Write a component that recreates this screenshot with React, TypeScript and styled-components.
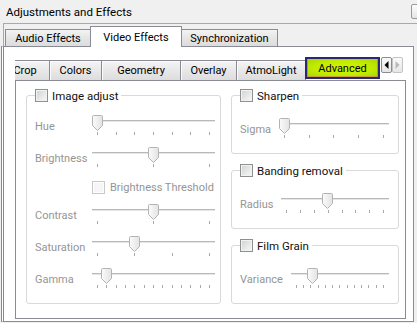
import React from "react";
import styled, { createGlobalStyle } from "styled-components";

const FONT = `Roboto, "Liberation Sans", "DejaVu Sans", sans-serif`;

const Global = createGlobalStyle`
  html, body { margin: 0; padding: 0; background: #f0f0f0; }
  * { box-sizing: border-box; }
`;

const Window = styled.div`
  width: 417px;
  height: 323px;
  overflow: hidden;
  background: #f0f0f0;
  display: flex;
  flex-direction: column;
  font-family: ${FONT};
  font-size: 11px;
  color: #000;
`;

const TitleBar = styled.div`
  height: 23px;
  flex: none;
  display: flex;
  align-items: center;
  justify-content: space-between;
  padding-left: 6px;
  font-size: 11.5px;
`;

const TitleButton = styled.div`
  width: 12px;
  height: 15px;
  margin-right: -6px;
  border: 1px solid #9a9a9a;
  border-radius: 2px;
  background: linear-gradient(#fdfdfd, #e4e4e4);
`;

const OuterTabBar = styled.div`
  height: 23px;
  flex: none;
  margin-left: 3px;
  border-top: 1px solid #a9a9a9;
  border-left: 1px solid #a9a9a9;
  padding-left: 1px;
  display: flex;
  align-items: flex-end;
`;

const OuterTab = styled.div<{ $w: number; $active?: boolean }>`
  width: ${(p) => p.$w}px;
  height: ${(p) => (p.$active ? 21 : 17)}px;
  margin-bottom: ${(p) => (p.$active ? -1 : 0)}px;
  margin-right: -1px;
  position: relative;
  z-index: ${(p) => (p.$active ? 2 : 1)};
  display: flex;
  align-items: center;
  justify-content: center;
  border: 1px solid #898c95;
  border-bottom: none;
  background: ${(p) =>
    p.$active ? "#ffffff" : "linear-gradient(#f3f3f3, #e6e6e6 50%, #dcdcdc)"};
  font-size: 11px;
  white-space: nowrap;
`;

const OuterPane = styled.div`
  width: 413px;
  height: 276px;
  margin-left: 1px;
  flex: none;
  background: #ffffff;
  border: 1px solid #898c95;
  border-left: 3px double #8a8a8a;
  padding: 10px 0 0 11px;
  display: flex;
  flex-direction: column;
`;

const InnerTabRow = styled.div`
  width: 391px;
  height: 23px;
  flex: none;
  display: flex;
`;

const TabStrip = styled.div`
  flex: 1;
  min-width: 0;
  overflow: hidden;
  display: flex;
  align-items: flex-end;
`;

const InnerTab = styled.div<{ $w: number; $shift?: number }>`
  flex: none;
  width: ${(p) => p.$w}px;
  height: 20px;
  margin-left: ${(p) => p.$shift ?? 0}px;
  margin-right: -1px;
  display: flex;
  align-items: center;
  justify-content: center;
  border: 1px solid #898c95;
  border-bottom: none;
  background: linear-gradient(#f4f4f4, #e8e8e8 50%, #dddddd);
  box-shadow: inset 1px 1px 0 #fbfbfb;
  font-size: 11px;
  white-space: nowrap;
`;

const ActiveInnerTab = styled.div<{ $w: number }>`
  flex: none;
  align-self: flex-start;
  width: ${(p) => p.$w}px;
  height: 22px;
  display: flex;
  align-items: center;
  justify-content: center;
  border: 2px solid #2c2679;
  background: radial-gradient(ellipse at 50% 50%, #d2f600 0%, #c0ea00 60%, #a9d400 100%);
  box-shadow: inset 1px 0 0 #d48a2a, inset -1px 0 0 #d48a2a, inset 0 1px 0 #c9c04a,
    inset 0 -1px 0 #c9a040;
  font-size: 11px;
  white-space: nowrap;
  position: relative;
  z-index: 1;
`;

const ScrollButtons = styled.div`
  flex: none;
  display: flex;
  margin: 0 3px 0 1px;
  align-self: flex-start;
`;

const ScrollButton = styled.div<{ $disabled?: boolean }>`
  width: 11px;
  height: 16px;
  display: flex;
  align-items: center;
  justify-content: center;
  border: 1px solid ${(p) => (p.$disabled ? "#c4c4c4" : "#8c8c8c")};
  border-radius: 2px;
  background: linear-gradient(#fafafa, #e6e6e6);
`;

const InnerPane = styled.div`
  width: 391px;
  height: 239px;
  flex: none;
  border: 1px solid #898c95;
  background: #ffffff;
  padding: 7px 0 0 10px;
  display: flex;
  gap: 10px;
  align-items: stretch;
`;

const Columns = styled.div`
  display: flex;
  gap: 10px;
  height: 216px;
`;

const Group = styled.fieldset<{ $pt: number; $pr: number; $h?: number }>`
  margin: 0;
  min-width: 0;
  border: 1px solid #d6dadd;
  border-radius: 3px;
  padding: ${(p) => p.$pt}px ${(p) => p.$pr}px 0 8px;
  ${(p) => (p.$h ? `height: ${p.$h}px;` : "")}
`;

const LeftGroup = styled(Group)`
  width: 195px;
`;

const RightColumn = styled.div`
  width: 168px;
  display: flex;
  flex-direction: column;
  gap: 9px;
`;

const Legend = styled.legend`
  padding: 0 3px 0 0;
  height: 15px;
  display: flex;
  align-items: center;
  gap: 4px;
  font-size: 11.5px;
  color: #111;
`;

const Checkbox = styled.span<{ $disabled?: boolean }>`
  display: inline-block;
  flex: none;
  width: 13px;
  height: 13px;
  border: 1px solid ${(p) => (p.$disabled ? "#c9c9c9" : "#8e8f8f")};
  background: ${(p) =>
    p.$disabled ? "#f6f6f6" : "linear-gradient(135deg, #cfd1d3 0%, #eceded 70%, #f7f7f7 100%)"};
  box-shadow: inset 0 0 0 1px ${(p) => (p.$disabled ? "#fdfdfd" : "#f2f2f2")};
`;

const Row = styled.div<{ $h: number }>`
  height: ${(p) => p.$h}px;
  display: flex;
  align-items: flex-start;
`;

const GridLabel = styled.div`
  width: 57px;
  flex: none;
  line-height: 23px;
  font-size: 11px;
  color: #959595;
  white-space: nowrap;
`;

const InlineLabel = styled.div`
  flex: none;
  line-height: 23px;
  font-size: 11px;
  color: #959595;
  margin-right: 8px;
`;

const CheckRow = styled.div`
  height: 25px;
  padding: 2px 0 0 57px;
  display: flex;
  align-items: flex-start;
  gap: 5px;
`;

const CheckText = styled.span`
  font-size: 11px;
  line-height: 13px;
  color: #959595;
  white-space: nowrap;
`;

const SliderBox = styled.div<{ $w?: number }>`
  position: relative;
  height: 20px;
  ${(p) => (p.$w ? `width: ${p.$w}px; flex: none;` : "flex: 1; min-width: 0;")}
  display: flex;
  flex-direction: column;
`;

const Track = styled.div`
  margin-top: 5px;
  height: 2px;
  border-top: 1px solid #b9b9b9;
  border-bottom: 1px solid #e6e6e6;
`;

const Ticks = styled.div`
  margin-top: 10px;
  height: 3px;
  padding: 0 5px;
  display: flex;
  justify-content: space-between;
`;

const Tick = styled.span`
  width: 1px;
  height: 3px;
  background: #a9a9a9;
`;

const ThumbWrap = styled.div`
  position: absolute;
  top: 0;
  width: 11px;
  height: 16px;
`;

function Thumb() {
  return (
    <svg width="11" height="16" viewBox="0 0 11 16">
      <defs>
        <linearGradient id="tg" x1="0" y1="0" x2="1" y2="0">
          <stop offset="0" stopColor="#fbfbfb" />
          <stop offset="1" stopColor="#e3e3e3" />
        </linearGradient>
      </defs>
      <path
        d="M1.5 0.5 H9.5 Q10.5 0.5 10.5 1.5 V10.5 L5.5 15.5 L0.5 10.5 V1.5 Q0.5 0.5 1.5 0.5 Z"
        fill="url(#tg)"
        stroke="#b3b3b3"
      />
    </svg>
  );
}

function Slider({ ticks, value, width }: { ticks: number; value: number; width?: number }) {
  return (
    <SliderBox $w={width}>
      <Track />
      <Ticks>
        {Array.from({ length: ticks }).map((_, i) => (
          <Tick key={i} />
        ))}
      </Ticks>
      <ThumbWrap style={{ left: `calc(${value} * (100% - 11px))` }}>
        <Thumb />
      </ThumbWrap>
    </SliderBox>
  );
}

function Arrow({ dir, color }: { dir: "left" | "right"; color: string }) {
  return (
    <svg width="5" height="8" viewBox="0 0 5 8">
      {dir === "left" ? (
        <path d="M4.5 0 V8 L0.5 4 Z" fill={color} />
      ) : (
        <path d="M0.5 0 V8 L4.5 4 Z" fill={color} />
      )}
    </svg>
  );
}

const leftRows = [
  { label: "Hue", ticks: 7, value: 0 },
  { label: "Brightness", ticks: 3, value: 0.5 },
];
const leftRows2 = [
  { label: "Contrast", ticks: 3, value: 0.5 },
  { label: "Saturation", ticks: 4, value: 1 / 3 },
  { label: "Gamma", ticks: 13, value: 1 / 12 },
];

const rightGroups = [
  { title: "Sharpen", label: "Sigma", ticks: 5, value: 0 },
  { title: "Banding removal", label: "Radius", ticks: 8, value: 0.42 },
  { title: "Film Grain", label: "Variance", ticks: 13, value: 0.19 },
];

export default function App() {
  return (
    <Window>
      <Global />
      <TitleBar>
        <span>Adjustments and Effects</span>
        <TitleButton />
      </TitleBar>
      <OuterTabBar>
        <OuterTab $w={86}>Audio Effects</OuterTab>
        <OuterTab $w={92} $active>
          Video Effects
        </OuterTab>
        <OuterTab $w={97}>Synchronization</OuterTab>
      </OuterTabBar>
      <OuterPane>
        <InnerTabRow>
          <TabStrip>
            <InnerTab $w={50} $shift={-15}>
              Crop
            </InnerTab>
            <InnerTab $w={53}>Colors</InnerTab>
            <InnerTab $w={80}>Geometry</InnerTab>
            <InnerTab $w={57}>Overlay</InnerTab>
            <InnerTab $w={70}>AtmoLight</InnerTab>
            <ActiveInnerTab $w={75}>Advanced</ActiveInnerTab>
          </TabStrip>
          <ScrollButtons>
            <ScrollButton>
              <Arrow dir="left" color="#000" />
            </ScrollButton>
            <ScrollButton $disabled>
              <Arrow dir="right" color="#b9b9b9" />
            </ScrollButton>
          </ScrollButtons>
        </InnerTabRow>
        <InnerPane>
          <Columns>
            <LeftGroup $pt={12} $pr={4}>
              <Legend>
                <Checkbox />
                Image adjust
              </Legend>
              {leftRows.map((r) => (
                <Row $h={32} key={r.label}>
                  <GridLabel>{r.label}</GridLabel>
                  <Slider ticks={r.ticks} value={r.value} width={123} />
                </Row>
              ))}
              <CheckRow>
                <Checkbox $disabled />
                <CheckText>Brightness Threshold</CheckText>
              </CheckRow>
              {leftRows2.map((r) => (
                <Row $h={32} key={r.label}>
                  <GridLabel>{r.label}</GridLabel>
                  <Slider ticks={r.ticks} value={r.value} width={123} />
                </Row>
              ))}
            </LeftGroup>
            <RightColumn>
              {rightGroups.map((g) => (
                <Group $pt={15} $pr={9} $h={66} key={g.title}>
                  <Legend>
                    <Checkbox />
                    {g.title}
                  </Legend>
                  <Row $h={22}>
                    <InlineLabel>{g.label}</InlineLabel>
                    <Slider ticks={g.ticks} value={g.value} />
                  </Row>
                </Group>
              ))}
            </RightColumn>
          </Columns>
        </InnerPane>
      </OuterPane>
    </Window>
  );
}
